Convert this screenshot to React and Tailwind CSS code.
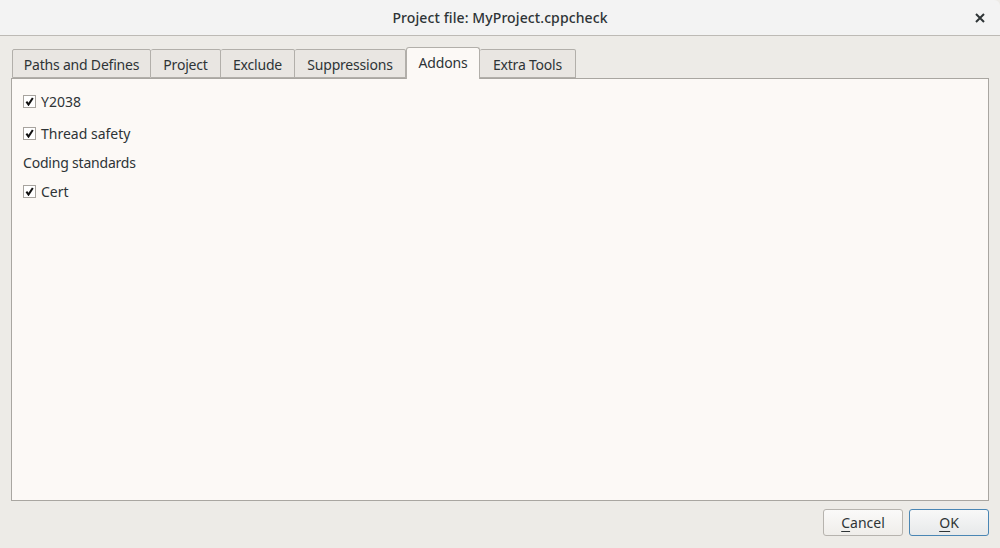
import React, { useState } from "react";

// tab widths measured from the dialog
const tabs = [
  { name: "Paths and Defines", w: "w-[139px]" },
  { name: "Project", w: "w-[70px]" },
  { name: "Exclude", w: "w-[74px]" },
  { name: "Suppressions", w: "w-[111px]" },
  { name: "Addons", w: "w-[74px]" },
  { name: "Extra Tools", w: "w-[96px]" },
];

function CheckBox({ label, checked, onToggle }) {
  return (
    <label className="flex items-center gap-[5px] cursor-pointer" onClick={onToggle}>
      <span className="w-[13px] h-[13px] border border-[#a7a39e] bg-white flex items-center justify-center">
        {checked && (
          <svg width="9" height="9" viewBox="0 0 9 9">
            <path d="M1.4 4.6 L3.5 7.6 L7.8 1" fill="none" stroke="#111" strokeWidth="2" />
          </svg>
        )}
      </span>
      <span>{label}</span>
    </label>
  );
}

function App() {
  const [active, setActive] = useState("Addons");
  const [checks, setChecks] = useState({ y2038: true, thread: true, cert: true });

  const toggle = (key) => setChecks({ ...checks, [key]: !checks[key] });

  return (
    <div className="w-[1000px] h-[548px] flex flex-col bg-[#edebe7] text-[14px] text-[#2e3436] font-['Noto_Sans',sans-serif] overflow-hidden">
      {/* Title bar */}
      <div className="h-[36px] shrink-0 bg-[#f3f3f3] border-b border-[#bdbab5] rounded-tr-[6px] flex items-center justify-center relative">
        <span className="text-[#2e3436] font-medium tracking-[0.1px]">Project file: MyProject.cppcheck</span>
        <button className="absolute right-[12px] top-[10px] w-[16px] h-[16px] flex items-center justify-center">
          <svg width="10" height="10" viewBox="0 0 10 10">
            <path d="M1 1 L9 9 M9 1 L1 9" stroke="#2e3436" strokeWidth="2" />
          </svg>
        </button>
      </div>

      <div className="flex-1 flex flex-col px-[11px] pt-[11px]">
        {/* Tabs */}
        <div className="flex items-end pl-[1px] h-[31px] relative z-10">
          {tabs.map((t) => {
            const sel = t.name === active;
            return (
              <button
                key={t.name}
                onClick={() => setActive(t.name)}
                className={
                  sel
                    ? `${t.w} h-[32px] -mb-[1px] bg-[#fcf9f6] border border-b-0 border-[#b2afaa] rounded-t-[3px] leading-none pb-[2px] tracking-[-0.2px]`
                    : `${t.w} h-[29px] bg-[#e9e6e2] border border-[#b2afaa] border-l-0 first:border-l rounded-t-[2px] leading-none pt-[2px] tracking-[-0.2px]`
                }
              >
                {t.name}
              </button>
            );
          })}
        </div>

        {/* Panel */}
        <div className="h-[423px] bg-[#fcf9f6] border border-[#a9a6a1] flex flex-col pl-[11px] pt-[13px]">
          {active === "Addons" && (
            <>
              <div className="h-[18px] flex items-center">
                <CheckBox label="Y2038" checked={checks.y2038} onToggle={() => toggle("y2038")} />
              </div>
              <div className="h-[18px] mt-[14px] flex items-center">
                <CheckBox label="Thread safety" checked={checks.thread} onToggle={() => toggle("thread")} />
              </div>
              <div className="h-[18px] mt-[11px] flex items-center tracking-[-0.2px]">Coding standards</div>
              <div className="h-[18px] mt-[11px] flex items-center">
                <CheckBox label="Cert" checked={checks.cert} onToggle={() => toggle("cert")} />
              </div>
            </>
          )}
        </div>

        {/* Buttons */}
        <div className="flex justify-end gap-[6px] mt-[8px]">
          <button className="w-[80px] h-[27px] rounded-[3px] border border-[#b6b3ae] bg-gradient-to-b from-[#fbfaf9] to-[#efedea]">
            <span className="underline underline-offset-[3px] decoration-1">C</span>ancel
          </button>
          <button className="w-[80px] h-[27px] rounded-[3px] border border-[#4a86b4] bg-gradient-to-b from-[#f8f8f8] to-[#e7e9ea]">
            <span className="underline underline-offset-[3px] decoration-1">O</span>K
          </button>
        </div>
      </div>
    </div>
  );
}

export default App;
